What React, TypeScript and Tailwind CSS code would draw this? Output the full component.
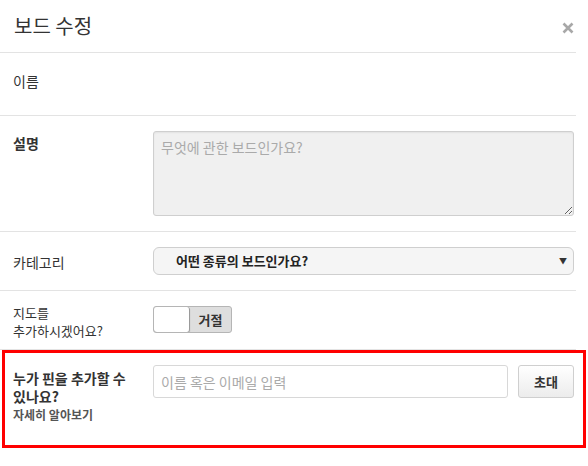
import React from 'react';

const font = { fontFamily: '"Noto Sans CJK KR", "Noto Sans", sans-serif' };

const Row: React.FC<{ label: React.ReactNode; children?: React.ReactNode; className?: string }> = ({
  label,
  children,
  className = '',
}) => (
  <div className={`flex border-b border-[#e3e3e3] w-[576px] ${className}`}>
    <div className="w-[153px] shrink-0 pl-[13px] text-[14px] text-[#333] leading-[14px]">{label}</div>
    <div className="w-[421px]">{children}</div>
  </div>
);

export default function App() {
  return (
    <div className="w-[588px] h-[466px] bg-white relative overflow-hidden" style={font}>
      {/* Header */}
      <div className="w-[576px] h-[53px] border-b border-[#e3e3e3] flex items-start justify-between">
        <h1 className="pl-[14px] pt-[13px] text-[20px] leading-[26px] text-[#333] font-normal">보드 수정</h1>
        <button className="mt-[22px] mr-[2px]" aria-label="닫기">
          <svg width="12" height="12" viewBox="0 0 12 12">
            <path d="M1.5 1.5 L10.5 10.5 M10.5 1.5 L1.5 10.5" stroke="#a8a8a8" strokeWidth="2.6" />
          </svg>
        </button>
      </div>

      {/* 이름 */}
      <Row label={<div className="pt-[21px]">이름</div>} className="h-[63px]" />

      {/* 설명 */}
      <Row label={<div className="pt-[20px] font-bold">설명</div>} className="h-[116px]">
        <div className="pt-[15px]">
          <textarea
            readOnly
            placeholder="무엇에 관한 보드인가요?"
            className="block w-[421px] h-[85px] bg-[#f0f0f0] border border-[#cfcfcf] rounded-[3px] px-[7px] py-[6px] text-[14px] leading-[18px] placeholder:text-[#aaa] shadow-[inset_0_1px_2px_rgba(0,0,0,0.06)] outline-none"
            style={font}
          />
        </div>
      </Row>

      {/* 카테고리 */}
      <Row label={<div className="pt-[23px]">카테고리</div>} className="h-[59px]">
        <div className="pt-[15px]">
          <div className="h-[28px] w-[421px] bg-[#f5f5f5] border border-[#cfcfcf] rounded-[6px] flex items-center justify-between pl-[22px] pr-[6px]">
            <span className="text-[13px] font-bold text-[#222]">어떤 종류의 보드인가요?</span>
            <span className="text-[8px] text-[#333]">▼</span>
          </div>
        </div>
      </Row>

      {/* 지도 */}
      <Row
        label={
          <div className="pt-[13px] text-[13px] leading-[18px]">
            <div>지도를</div>
            <div>추가하시겠어요?</div>
          </div>
        }
        className="h-[59px]"
      >
        <div className="pt-[15px]">
          <div className="flex h-[27px] w-[79px] border border-[#b5b5b5] rounded-[3px] bg-[#dedede] overflow-hidden">
            <div className="w-[36px] h-full bg-white border-r border-[#9a9a9a] rounded-[3px] shadow-[0_1px_1px_rgba(0,0,0,0.25)]" />
            <div className="flex-1 flex items-center justify-center text-[13px] font-bold text-[#333]">거절</div>
          </div>
        </div>
      </Row>

      {/* 협업자 */}
      <div className="ml-[2px] w-[584px] h-[98px] border-[3px] border-[#ff0000] flex">
        <div className="w-[148px] shrink-0 pl-[8px] pt-[16px]">
          <div className="text-[14px] leading-[18px] font-bold text-[#333]">
            <div>누가 핀을 추가할 수</div>
            <div>있나요?</div>
          </div>
          <div className="text-[12px] leading-[14px] font-bold text-[#555] mt-[3px]">자세히 알아보기</div>
        </div>
        <div className="pt-[12px] flex gap-[10px]">
          <input
            readOnly
            placeholder="이름 혹은 이메일 입력"
            className="w-[355px] h-[33px] border border-[#d8d8d8] rounded-[3px] px-[7px] text-[14px] placeholder:text-[#aaa] outline-none"
            style={font}
          />
          <button className="w-[56px] h-[33px] border border-[#cfcfcf] rounded-[3px] bg-gradient-to-b from-white to-[#ececec] text-[13px] font-bold text-[#333]">
            초대
          </button>
        </div>
      </div>
    </div>
  );
}
